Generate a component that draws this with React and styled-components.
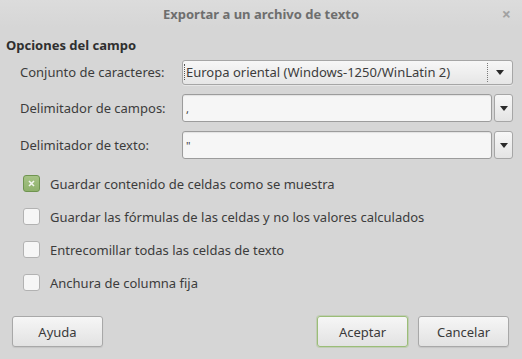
import React from 'react';
import styled, { createGlobalStyle } from 'styled-components';

const GlobalStyle = createGlobalStyle`
  html, body {
    margin: 0;
    padding: 0;
    background: #d6d6d6;
  }
  body {
    font-family: "Noto Sans", "Open Sans", sans-serif;
    font-size: 13px;
    color: #3c3c3c;
  }
`;

const OPTIONS = [
  { label: 'Guardar contenido de celdas como se muestra', checked: true },
  { label: 'Guardar las fórmulas de las celdas y no los valores calculados', checked: false },
  { label: 'Entrecomillar todas las celdas de texto', checked: false },
  { label: 'Anchura de columna fija', checked: false },
];

const Window = styled.div`
  width: 522px;
  height: 359px;
  background: #d6d6d6;
  display: flex;
  flex-direction: column;
  overflow: hidden;
`;

const TitleBar = styled.div`
  height: 27px;
  flex-shrink: 0;
  display: flex;
  align-items: center;
  justify-content: center;
  position: relative;
  background: linear-gradient(#dcdcdc, #d6d6d6);
`;

const Title = styled.div`
  font-weight: 700;
  font-size: 13px;
  color: #6e6e6e;
`;

const CloseButton = styled.div`
  position: absolute;
  right: 11px;
  top: 3px;
  font-size: 16px;
  font-weight: 700;
  color: #a2a2a2;
`;

const Body = styled.div`
  padding: 0 9px 0 6px;
  display: flex;
  flex-direction: column;
`;

const Heading = styled.div`
  font-weight: 700;
  line-height: 18px;
  margin-top: 9px;
  color: #2f2f2f;
`;

const FieldGrid = styled.div`
  margin-top: 5px;
  display: grid;
  grid-template-columns: 176px 1fr;
  grid-template-rows: 26px 28px 28px;
  row-gap: 9px;
  align-items: center;
`;

const Label = styled.div`
  padding-left: 14px;
  white-space: nowrap;
`;

const ComboButton = styled.div`
  height: 25px;
  box-sizing: border-box;
  border: 1px solid #a6a6a6;
  border-radius: 3px;
  background: linear-gradient(#f7f7f7, #e6e6e6);
  display: flex;
  align-items: center;
  box-shadow: 0 1px 0 rgba(255, 255, 255, 0.4);
`;

const ComboText = styled.div`
  flex: 1;
  padding-left: 1px;
  border-left: 1px dotted #555;
  margin-left: 1px;
  line-height: 16px;
  white-space: nowrap;
`;

const ComboArrow = styled.div`
  width: 24px;
  align-self: stretch;
  margin: 2px 0;
  border-left: 1px dotted #7a7a7a;
  display: flex;
  align-items: center;
  justify-content: center;
`;

const Arrow = styled.span`
  width: 0;
  height: 0;
  border-left: 4px solid transparent;
  border-right: 4px solid transparent;
  border-top: 5px solid #2a2a2a;
`;

const EntryRow = styled.div`
  display: flex;
  height: 28px;
  gap: 2px;
`;

const Entry = styled.div`
  flex: 1;
  box-sizing: border-box;
  border: 1px solid #9c9c9c;
  border-radius: 3px;
  background: #f6f6f6;
  box-shadow: inset 0 1px 1px rgba(0, 0, 0, 0.08);
  display: flex;
  align-items: center;
  padding-left: 3px;
  font-size: 11px;
`;

const EntryButton = styled.div`
  width: 19px;
  box-sizing: border-box;
  border: 1px solid #a6a6a6;
  border-radius: 3px;
  background: linear-gradient(#f7f7f7, #e4e4e4);
  display: flex;
  align-items: center;
  justify-content: center;
`;

const CheckList = styled.div`
  margin-top: 8px;
  display: flex;
  flex-direction: column;
`;

const CheckRow = styled.label`
  height: 33px;
  display: flex;
  align-items: center;
  gap: 10px;
  padding-left: 17px;
`;

const Box = styled.span`
  width: 17px;
  height: 17px;
  box-sizing: border-box;
  border-radius: 3px;
  border: 1px solid ${p => (p.$checked ? '#6f9450' : '#b2b2b2')};
  background: ${p => (p.$checked ? 'linear-gradient(#a6c386, #8fb16c)' : '#f6f6f6')};
  display: flex;
  align-items: center;
  justify-content: center;
  flex-shrink: 0;
`;

const Footer = styled.div`
  margin-top: auto;
  margin-bottom: 12px;
  padding: 0 13px 0 12px;
  display: flex;
  gap: 10px;
`;

const Spacer = styled.div`
  flex: 1;
`;

const Button = styled.div`
  width: 91px;
  height: 31px;
  box-sizing: border-box;
  border-radius: 3px;
  border: 1px solid ${p => (p.$default ? '#9bbd78' : '#a8a8a8')};
  box-shadow: ${p => (p.$default ? '0 0 0 1px rgba(155, 189, 120, 0.35)' : '0 1px 1px rgba(0,0,0,0.08)')};
  background: linear-gradient(#f6f6f6, #e2e2e2);
  display: flex;
  align-items: center;
  justify-content: center;
  color: #3a3a3a;
`;

function CrossMark() {
  return (
    <svg width="7" height="7" viewBox="0 0 7 7">
      <path d="M1 1 L6 6 M6 1 L1 6" stroke="#f2f5ee" strokeWidth="1.6" />
    </svg>
  );
}

export default function App() {
  return (
    <Window>
      <GlobalStyle />
      <TitleBar>
        <Title>Exportar a un archivo de texto</Title>
        <CloseButton>×</CloseButton>
      </TitleBar>

      <Body>
        <Heading>Opciones del campo</Heading>

        <FieldGrid>
          <Label>Conjunto de caracteres:</Label>
          <ComboButton>
            <ComboText>Europa oriental (Windows-1250/WinLatin 2)</ComboText>
            <ComboArrow>
              <Arrow />
            </ComboArrow>
          </ComboButton>

          <Label>Delimitador de campos:</Label>
          <EntryRow>
            <Entry>,</Entry>
            <EntryButton>
              <Arrow />
            </EntryButton>
          </EntryRow>

          <Label>Delimitador de texto:</Label>
          <EntryRow>
            <Entry>"</Entry>
            <EntryButton>
              <Arrow />
            </EntryButton>
          </EntryRow>
        </FieldGrid>

        <CheckList>
          {OPTIONS.map(option => (
            <CheckRow key={option.label}>
              <Box $checked={option.checked}>{option.checked && <CrossMark />}</Box>
              {option.label}
            </CheckRow>
          ))}
        </CheckList>
      </Body>

      <Footer>
        <Button>Ayuda</Button>
        <Spacer />
        <Button $default>Aceptar</Button>
        <Button>Cancelar</Button>
      </Footer>
    </Window>
  );
}
